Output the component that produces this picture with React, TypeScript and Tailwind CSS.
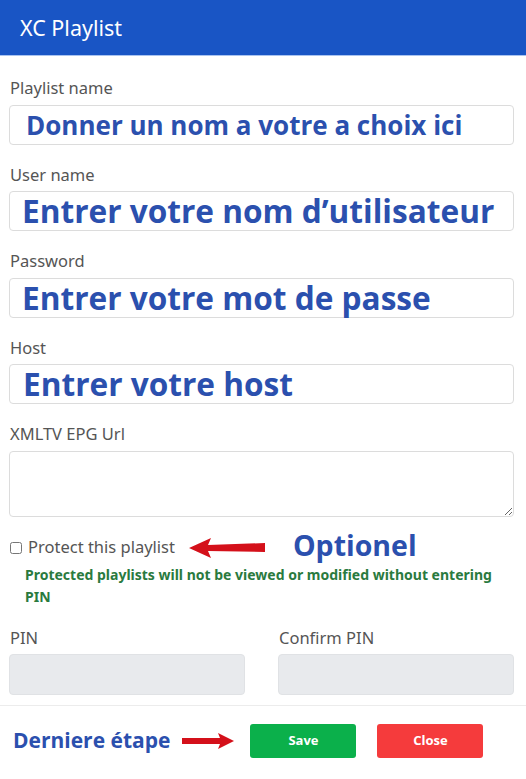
import React from "react";

const ANNOT = "font-['Open_Sans',sans-serif] font-bold text-[#2b50ae] leading-none";
const LABEL = "text-[16.5px] text-[#555] leading-none mb-[8px] pl-[1px]";

function Field({ label, hint, size }: { label: string; hint: string; size: string }) {
  return (
    <div className="mb-[22px]">
      <div className={LABEL}>{label}</div>
      <div className="h-[40px] border border-[#dcdcdc] rounded-[4px] bg-white flex items-center">
        <span className={`${ANNOT} ${size} whitespace-nowrap`}>{hint}</span>
      </div>
    </div>
  );
}

function RedArrow() {
  return (
    <svg width="78" height="22" viewBox="0 0 78 22">
      <polygon points="0,11 22,1 19,8 76,6 76,15 19,14 22,21" fill="#d4101a" />
    </svg>
  );
}

export default function App() {
  return (
    <div className="w-[526px] h-[779px] bg-white font-['Noto_Sans',sans-serif] overflow-hidden">
      <header className="h-[56px] bg-[#1955c5] border-b border-[#a9c3f0] flex items-center pl-[20px]">
        <h1 className="text-white text-[21.5px] leading-none">XC Playlist</h1>
      </header>

      <div className="pl-[9px] pr-[12px] pt-[24px]">
        <Field label="Playlist name" hint="Donner un nom a votre a choix ici" size="text-[26px] pl-[16px]" />
        <Field label="User name" hint="Entrer votre nom d’utilisateur" size="text-[31.6px] pl-[12px]" />
        <Field label="Password" hint="Entrer votre mot de passe" size="text-[31.6px] pl-[12px]" />
        <Field label="Host" hint="Entrer votre host" size="text-[31.6px] pl-[13px]" />

        <div className={LABEL}>XMLTV EPG Url</div>
        <textarea className="block w-full h-[66px] border border-[#dcdcdc] rounded-[4px] resize-y outline-none" />

        <div className="flex items-center mt-[18px] h-[26px]">
          <input type="checkbox" className="w-[12px] h-[12px] ml-[1px] accent-white" />
          <span className="ml-[6px] text-[16.5px] text-[#555]">Protect this playlist</span>
          <span className="ml-[14px] flex items-center"><RedArrow /></span>
          <span className={`${ANNOT} text-[28.5px] ml-[26px] -mt-[5px]`}>Optionel</span>
        </div>
        <p className="pl-[16px] pr-[20px] mt-[3px] text-[14px] leading-[22px] font-bold text-[#2a7a3e]">
          Protected playlists will not be viewed or modified without entering PIN
        </p>

        <div className="grid grid-cols-2 gap-[33px] mt-[22px]">
          <div>
            <div className={LABEL}>PIN</div>
            <div className="h-[41px] rounded-[4px] bg-[#e8eaed] border border-[#e0e2e5]" />
          </div>
          <div>
            <div className={LABEL}>Confirm PIN</div>
            <div className="h-[41px] rounded-[4px] bg-[#e8eaed] border border-[#e0e2e5]" />
          </div>
        </div>
      </div>

      <div className="mt-[10px] border-t border-[#ececec] flex items-center h-[70px] pl-[13px]">
        <span className={`${ANNOT} text-[21px]`}>Derniere étape</span>
        <span className="ml-[12px] flex items-center">
          <svg width="52" height="16" viewBox="0 0 52 16">
            <polygon points="52,8 36,0 38,5 0,5 0,11 38,11 36,16" fill="#d4101a" />
          </svg>
        </span>
        <button className="ml-[16px] w-[106px] h-[34px] rounded-[3px] bg-[#0bb04b] text-white text-[13px] font-bold font-['Open_Sans',sans-serif]">
          Save
        </button>
        <button className="ml-[21px] w-[106px] h-[34px] rounded-[3px] bg-[#f53b3c] text-white text-[13px] font-bold font-['Open_Sans',sans-serif]">
          Close
        </button>
      </div>
    </div>
  );
}
